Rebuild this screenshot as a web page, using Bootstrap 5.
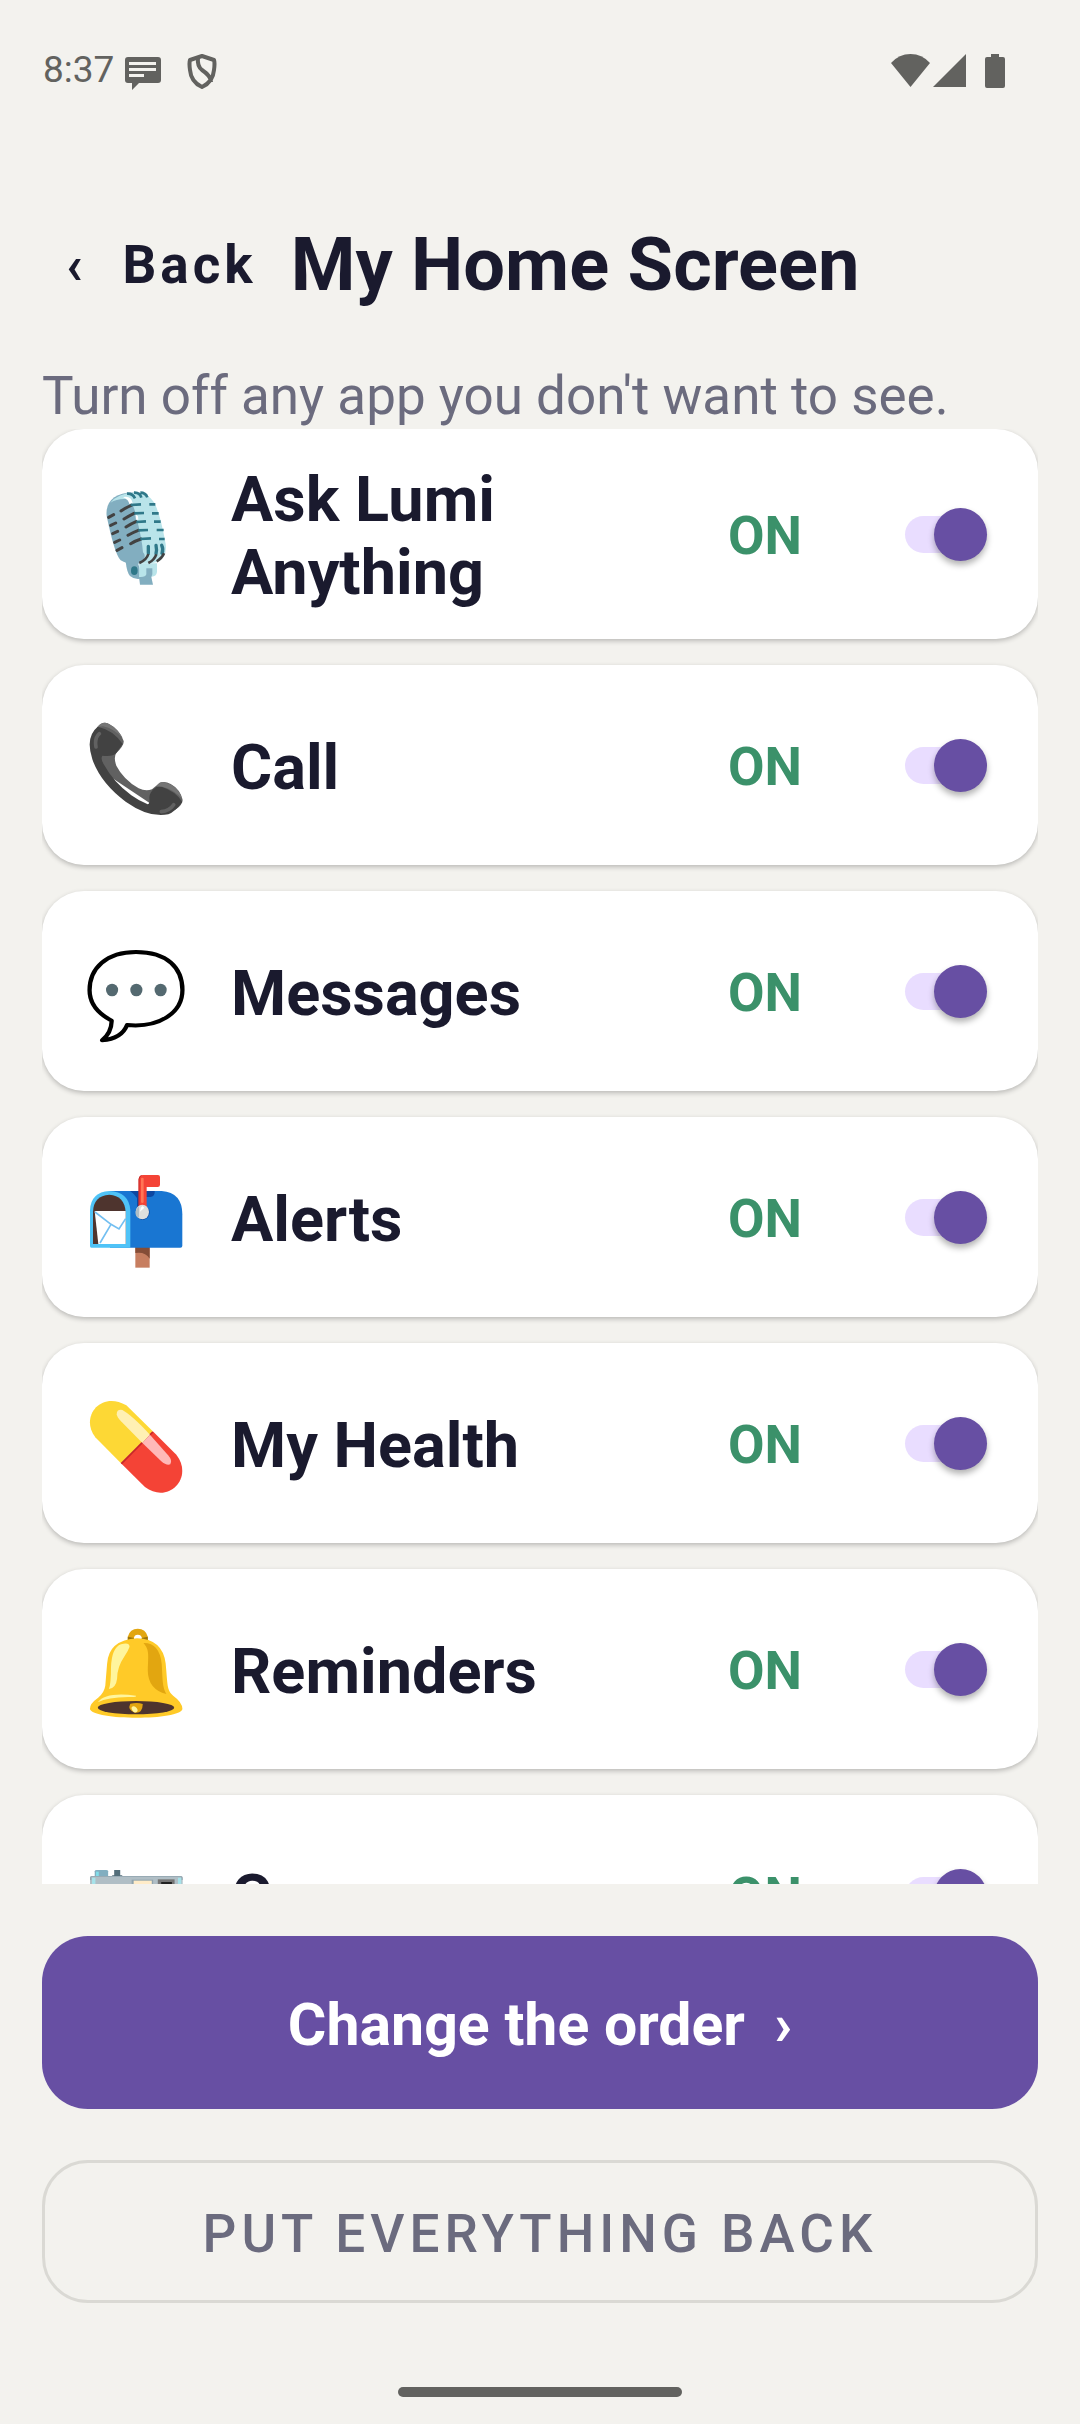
<!DOCTYPE html>
<html lang="en">
<head>
<meta charset="utf-8">
<meta name="viewport" content="width=device-width, initial-scale=1">
<title>My Home Screen</title>
<link href="https://cdn.jsdelivr.net/npm/bootstrap@5.3.0/dist/css/bootstrap.min.css" rel="stylesheet">
<style>
  :root { --ink: #1a1a2e; --muted: #6b6b7e; --violet: #674fa3; --paper: #f3f2ee; --system: #62625f; }
  body { background: var(--paper); color: var(--ink); font-family: Roboto, "Noto Sans", sans-serif; }
  .screen { height: 100vh; padding: 0 42px; }
  .status-bar { height: 165px; color: var(--system); font-size: 37px; line-height: 44px; padding: 48px 32px 0 1px; }
  .status-bar svg { display: block; fill: currentColor; }
  .status-icons { margin-left: 11px; }
  .page-head { height: 200px; padding: 0 24px; gap: 34px; }
  .page-head, .intro { flex: none; }
  .back-btn { font-size: 53px; line-height: 64px; font-weight: 700; letter-spacing: 4px; color: var(--ink); gap: 36px; }
  .page-title { font-size: 74px; line-height: 88px; font-weight: 700; }
  .intro { font-size: 53px; line-height: 62px; padding-bottom: 2px; color: var(--muted); }
  .app-list { gap: 26px; scrollbar-width: none; }
  .app-card { flex: none; min-height: 200px; padding: 30px 44px; border: 0; border-radius: 42px; box-shadow: 0 2px 5px rgba(0,0,0,.24); color: var(--ink); }
  .app-icon { width: 100px; height: 100px; margin: 8px 45px 0 0; flex: none; }
  .app-name { font-size: 63px; line-height: 73px; font-weight: 700; padding-top: 4px; }
  .app-state { font-size: 53px; line-height: 62px; font-weight: 700; color: #3b916a; width: 177px; padding-top: 3px; flex: none; }
  .form-check-input.app-switch { width: 82px; height: 37px; margin: 0 7px 0 0; border: 0; border-radius: 19px; background: #e9ddff; flex: none; display: flex; align-items: center; }
  .form-check-input.app-switch:checked { background: #e9ddff; }
  .app-switch::before { content: ""; width: 53px; height: 53px; flex: none; border-radius: 50%; background: #79747e; box-shadow: 0 4px 6px rgba(0,0,0,.3); }
  .app-switch:checked::before { margin-left: auto; background: var(--violet); }
  .actions { padding: 52px 0 0; gap: 51px; }
  .actions .btn { border-radius: 46px; padding-top: 12px; }
  .order-btn { height: 173px; font-size: 59px; font-weight: 700; color: #fff; background: var(--violet); }
  .reset-btn { height: 143px; font-size: 53px; font-weight: 500; letter-spacing: 5px; color: var(--muted); border: 3px solid #dad9d4; }
  .order-btn:hover { color: #fff; background: #594292; }
  .gesture { height: 121px; padding-top: 84px; }
  .gesture span { width: 284px; height: 10px; border-radius: 5px; background: var(--system); }
</style>
</head>
<body>
<div class="screen d-flex flex-column">
  <div class="status-bar d-flex justify-content-between flex-shrink-0">
    <div class="d-flex">
      <span>8:37</span>
      <svg class="status-icons" width="36" height="44" viewBox="0 0 36 44"><path fill-rule="evenodd" d="M3 9h30a3 3 0 0 1 3 3v20a3 3 0 0 1-3 3H14l-7 7v-7H3a3 3 0 0 1-3-3V12a3 3 0 0 1 3-3zm1 5v3h27v-3zm0 6v3h27v-3zm0 6v3h15v-3z"/></svg>
      <svg class="ms-4" width="34" height="44" viewBox="0 0 34 44"><path d="M17 8 L29 12 Q30 15 29 22 Q28 34 17 39 Q6 34 5 22 Q4 15 5 12 Z M13 10 Q12 18 17 22 Q26 28 26 34" style="fill:none;stroke:currentColor;stroke-width:4;stroke-linejoin:round"/></svg>
    </div>
    <div class="d-flex">
      <svg width="39" height="44" viewBox="0 0 39 44"><path d="M0 15Q8 6 19.500 6T39 15L19.500 39z"/></svg>
      <svg width="36" height="44" viewBox="-3 0 36 44"><path d="M33 6v33H0z"/></svg>
      <svg class="ms-3" width="24" height="44" viewBox="-3 0 24 44"><path d="M6 6h8v3h4a2 2 0 0 1 2 2v27a2 2 0 0 1-2 2H2a2 2 0 0 1-2-2V11a2 2 0 0 1 2-2h4z"/></svg>
    </div>
  </div>

  <header class="page-head d-flex align-items-center">
    <button type="button" class="back-btn btn border-0 p-0 d-flex"><span>‹</span><span>Back</span></button>
    <h1 class="page-title m-0">My Home Screen</h1>
  </header>
  <p class="intro mb-0">Turn off any app you don't want to see.</p>

  <main class="app-list d-flex flex-column flex-grow-1 overflow-auto">
    <div class="app-card card flex-row align-items-center">
      <svg class="app-icon" viewBox="18 24 300 300" aria-hidden="true">
        <path fill="#82aec0" d="M137 245h36l14 50q-22 6-37-7-9-10-13-43z"/>
        <path fill="#b9e4ea" d="M178 250h53v26q-2 14-16 14h-18l-20 5z"/>
        <path fill="#82aec0" d="M199 265h18v18l-3 8 5 23h-39l-3-23q19 2 22-8z"/>
        <path fill="#82aec0" d="M80 108Q76 72 103 52Q129 34 172 38L208 215L202 245Q152 260 122 241Q104 224 80 108z"/>
        <path fill="#b9e4ea" d="M91 68Q115 39 160 38Q204 36 222 67Q241 101 257 192Q262 235 231 246Q213 252 180 249Q203 231 189 217Q186 176 168 107Q159 61 137 57Q113 55 91 68z"/>
        <path fill="#fff" d="M129 51Q155 46 158 70L148 72Q146 59 129 51zM166 102l8 7 1 10h-7z"/>
        <g fill="none" stroke="#424242" stroke-width="9" stroke-linecap="round"><path d="M123 93q14-10 31-17M132 117q16-10 30-17M138 141q16-10 30-16M144 166q15-9 31-15M152 191q15-9 31-14M86 112l15-8M92 136l15-7M98 161l15-7M104 187l15-7M111 211l15-8"/></g>
        <g fill="none" stroke="#2f7889" stroke-width="8"><path d="M141 41q17-1 24 14M162 38q18-1 22 15M181 38q16 0 21 14M152 75l31-2M163 100l29-1M169 126l29-2M175 151l29-1M181 177l32-2M208 73h18M216 100h20M222 125h20M230 150h21M237 177h17"/></g>
        <g fill="none" stroke="#2f7889" stroke-width="10" stroke-linecap="round"><path d="M205 199v21M228 196q3 13 0 25M245 196q6 12 1 24"/></g>
        <path d="M178 249q22-9 27-27M205 249q18-9 24-26M230 244q16-9 22-24" fill="none" stroke="#424242" stroke-width="8"/>
        <ellipse cx="163" cy="272" rx="10" ry="13" fill="#2f7889"/>
      </svg>
      <label class="app-name flex-grow-1" for="sw1">Ask Lumi Anything</label><span class="app-state">ON</span>
      <input class="form-check-input app-switch" type="checkbox" role="switch" id="sw1" checked>
    </div>
    <div class="app-card card flex-row align-items-center">
      <svg class="app-icon" viewBox="168 897 300 300" aria-hidden="true">
        <path fill="#616161" d="M203 920Q218 902 237 912Q268 928 281 963Q283 975 259 999Q250 1011 259 1037Q280 1078 326 1105Q347 1115 366 1108L385 1092Q400 1080 422 1092Q451 1108 458 1140Q457 1155 438 1168L405 1180L225 1060L190 960z"/>
        <path fill="#424242" d="M203 920Q250 930 278 972L259 999Q249 1011 217 1007Q210 1017 224 1037Q249 1084 304 1126Q326 1142 353 1153Q360 1152 358 1134Q357 1121 371 1107Q380 1098 395 1100Q438 1114 457 1146Q434 1176 415 1183Q358 1195 287 1145Q212 1089 187 1018Q165 951 203 920z"/>
        <path fill="#757575" d="M203 920Q218 902 237 912Q264 926 278 955Q253 926 219 919zM380 1099Q389 1080 407 1088Q443 1095 457 1137Q430 1107 397 1100z"/>
        <path fill="none" stroke="#616161" stroke-width="11" stroke-linecap="round" d="M208 941Q193 954 198 981M394 1175Q418 1173 431 1154"/>
      </svg>
      <label class="app-name flex-grow-1" for="sw2">Call</label><span class="app-state">ON</span>
      <input class="form-check-input app-switch" type="checkbox" role="switch" id="sw2" checked>
    </div>
    <div class="app-card card flex-row align-items-center">
      <svg class="app-icon" viewBox="157 195 280 300" preserveAspectRatio="none" aria-hidden="true">
        <path fill="#fff" stroke="#000" stroke-width="12" stroke-linejoin="round" d="M297 216C385 216 427 264 427 330C427 400 360 444 272 435Q257 476 202 481Q228 459 229 422Q167 388 167 331C167 264 215 216 297 216z"/>
        <g fill="#546970"><ellipse cx="230" cy="330" rx="17" ry="19"/><ellipse cx="298" cy="330" rx="17" ry="19"/><ellipse cx="366" cy="330" rx="17" ry="19"/></g>
      </svg>
      <label class="app-name flex-grow-1" for="sw3">Messages</label><span class="app-state">ON</span>
      <input class="form-check-input app-switch" type="checkbox" role="switch" id="sw3" checked>
    </div>
    <div class="app-card card flex-row align-items-center">
      <svg class="app-icon" viewBox="18 3 300 300" aria-hidden="true">
        <path fill="#c77e60" d="M166 231h43v62h-43z"/><path fill="#854d37" d="M166 231h43v35q-14-22-43-17z"/>
        <path fill="#1976d2" d="M88 63h157q62 5 62 70v94q0 6-6 6H90z"/>
        <path fill="#0d47a1" d="M150 63h74q2 17-14 18h-12v29q12 4 11 20-4 20-24 20-10-4-14-24V84q-8-13-21-21z"/>
        <path fill="#4fc3f7" d="M30 228V120Q33 66 88 63Q146 65 151 120V233H34q-4 0-4-5z"/>
        <path fill="#4e342e" d="M39 222v-97Q41 77 88 74Q133 77 137 125v97z"/>
        <path fill="#fff" d="M44 123h93v99H55z"/><path fill="none" stroke="#73bff1" stroke-width="5" d="M45 126l48 37 24 14 20-31M93 163l-33 56"/>
        <path fill="#f44336" d="M176 112V28q1-13 13-13h45q6 0 6 6v23q0 7-7 7h-33v61z"/><path fill="none" stroke="#c62828" stroke-width="3" d="M177 112V28q1-8 7-12"/><path fill="none" stroke="#ff7555" stroke-width="8" stroke-linecap="round" d="M187 27v68"/>
        <ellipse cx="187" cy="126" rx="20" ry="22" fill="#dedede"/><path d="M177 109v35l-8-5q-7-16 8-30z" fill="#b0bec5"/><path d="M187 108q-7 5-7 17l13-12z" fill="#fff"/>
      </svg>
      <label class="app-name flex-grow-1" for="sw4">Alerts</label><span class="app-state">ON</span>
      <input class="form-check-input app-switch" type="checkbox" role="switch" id="sw4" checked>
    </div>
    <div class="app-card card flex-row align-items-center">
      <svg class="app-icon" viewBox="157 201 280 300" preserveAspectRatio="none" aria-hidden="true">
        <path fill="#fdd835" d="M255 400L183 322C139 260 199 181 270 226L344 304z"/>
        <path fill="#f44336" d="M255 400L344 304L410 374C460 443 387 524 322 471z"/>
        <path stroke="#c62828" stroke-width="5" d="M256 401L344 306"/>
        <path fill="#fff0b3" d="M243 253Q243 237 259 240Q288 258 336 314L315 339L255 274Q244 262 243 253z"/><path fill="#ffb9b8" d="M336 314L387 376Q400 392 393 403Q383 408 367 393L315 339z"/>
      </svg>
      <label class="app-name flex-grow-1" for="sw5">My Health</label><span class="app-state">ON</span>
      <input class="form-check-input app-switch" type="checkbox" role="switch" id="sw5" checked>
    </div>
    <div class="app-card card flex-row align-items-center">
      <svg class="app-icon" viewBox="157 879 280 300" preserveAspectRatio="none" aria-hidden="true">
        <path fill="#e2a610" fill-rule="evenodd" d="M274 930V920Q280 896 302 896T330 920V930zM291 927H314Q313 914 302 914T291 927z"/><path fill="#9b740b" d="M274 920l17 4v6h-17zM330 920l-17 4v6h17z"/>
        <path fill="#ffca28" d="M300 925Q371 927 380 1000C386 1067 383 1080 401 1097Q427 1117 427 1137C422 1172 176 1172 168 1137Q167 1121 191 1103Q208 1088 211 1067L216 1002Q220 930 300 925z"/>
        <path fill="#e2a610" d="M318 939Q363 938 369 1002C372 1051 370 1070 382 1092Q331 1078 330 1022C332 970 334 959 318 939z"/>
        <path fill="#fff59d" d="M279 950Q278 935 255 943Q229 953 227 1012Q227 1064 221 1077Q241 1074 244 1046Q244 1011 264 980Q275 963 279 950zM190 1117Q212 1085 297 1097Q301 1102 275 1101Q218 1102 190 1117z"/>
        <ellipse cx="297" cy="1133" rx="107" ry="20" fill="#4e342e"/><path fill="#e2a610" d="M281 1121q20-5 35 1q-1 29-22 26q-22-9-13-27z"/><ellipse cx="293" cy="1138" rx="7" ry="10" fill="#fff59d" transform="rotate(-35 293 1138)"/>
      </svg>
      <label class="app-name flex-grow-1" for="sw6">Reminders</label><span class="app-state">ON</span>
      <input class="form-check-input app-switch" type="checkbox" role="switch" id="sw6" checked>
    </div>
    <div class="app-card card flex-row align-items-center">
      <svg class="app-icon" viewBox="84 207 149 300" preserveAspectRatio="none" aria-hidden="true">
        <path fill="#82aec0" d="M97 290v-16q0-4 3-4h14q3 0 3 4v16z"/><path fill="#80deea" d="M99 275h4v15h-4z"/><path fill="#546e7a" d="M126 270h9v16h3v4h-15v-4h3z"/>
        <path fill="#b0bec5" d="M93 288h132q3 0 3 5v155H90V293q0-5 3-5z"/><path fill="none" stroke="#90a4ae" stroke-width="2" d="M91 300v-7q0-4 2-4h132q2 0 2 4v7"/><path fill="#a6e3ea" d="M93 293h5v30h-5zM221 293h5v30h-5z"/>
        <path fill="#90a4ae" d="M152 299h32v22h-32z"/><path fill="#ffecc8" d="M155 302h27v18h-27z"/><path fill="#757575" d="M191 298h25v24h-25z"/><path fill="#212121" d="M196 306h16v14h-16z"/>
        <ellipse cx="159" cy="380" rx="34" ry="56" fill="#424242"/>
      </svg>
      <label class="app-name flex-grow-1" for="sw7">Camera</label><span class="app-state">ON</span>
      <input class="form-check-input app-switch" type="checkbox" role="switch" id="sw7" checked>
    </div>
  </main>

  <footer class="actions d-flex flex-column flex-shrink-0">
    <button type="button" class="order-btn btn border-0">Change the order &nbsp;›</button>
    <button type="button" class="reset-btn btn">PUT EVERYTHING BACK</button>
  </footer>
  <div class="gesture d-flex justify-content-center flex-shrink-0"><span></span></div>
</div>
<script src="https://cdn.jsdelivr.net/npm/bootstrap@5.3.0/dist/js/bootstrap.bundle.min.js"></script>
</body>
</html>
